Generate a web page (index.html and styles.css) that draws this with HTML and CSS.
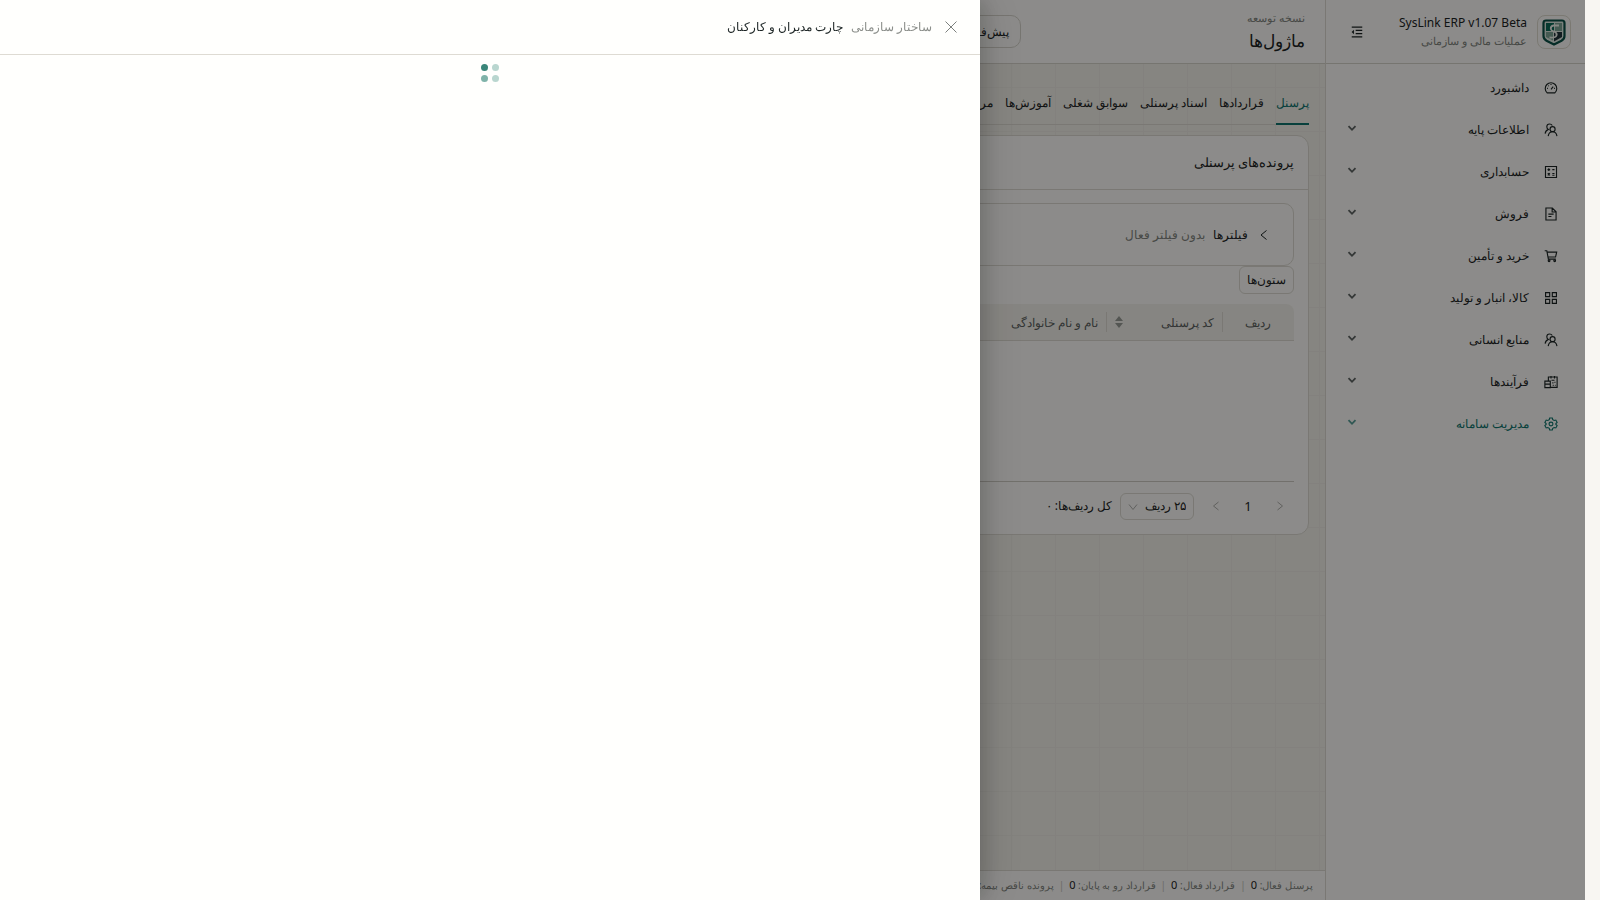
FILE: index.html
```
<!DOCTYPE html>
<html lang="fa" dir="rtl">
<head>
    <meta charset="UTF-8">
    <meta name="viewport" content="width=device-width, initial-scale=1.0">
    <title>SysLink ERP</title>
    <link rel="stylesheet" href="styles.css">
</head>
<body>
    <!-- icon sprites -->
    <svg class="sprites" aria-hidden="true">
        <symbol id="i-down" viewBox="0 0 10 10"><path d="M1.5 3.2 5 6.8 8.5 3.2"/></symbol>
        <symbol id="i-team" viewBox="0 0 16 16"><circle cx="9.800" cy="7" r="2.900"/><path d="M4.800 15C5.200 12 7 10 9.800 10S14.400 12 14.800 15"/><path d="M9.500 2.800C8.800 1.700 7.700 1.100 6.400 1.100 4.500 1.100 3.200 2.500 3.200 4.300 3.200 5.700 4 6.800 5 7.300 3 8 1.600 9.800 1.300 12.200"/></symbol>
    </svg>

    <div class="app">
        <aside class="sidebar">
            <div class="brand">
                <div class="brand-logo">
                    <svg viewBox="0 0 26 28">
                        <path d="M5 2.500H21Q23.500 2.500 23.500 5V18Q23.500 21 20.500 22.800L13 26.500 5.500 22.800Q2.500 21 2.500 18V5Q2.500 2.500 5 2.500Z" fill="#dfe9e2" stroke="#0c5147" stroke-width="2.200"/>
                        <path d="M14 5H21V13H14Z" fill="#7fa797"/>
                        <path d="M5 14H12V22.500L5 19Z" fill="#7fa797"/>
                        <path d="M13 14H21V19L13 23.500Z" fill="#22343b"/>
                        <path d="M5 5H13V13H5Z" fill="#0c6b58"/>
                        <path d="M18 7.500H12.500Q9.500 8 9.800 11 10 12.500 13 13.500 16.500 15 15.500 17.500 14.500 20 8.500 19.500" fill="none" stroke="#f3f6f1" stroke-width="1.800"/>
                    </svg>
                </div>
                <div class="brand-text">
                    <strong dir="ltr">SysLink ERP v1.07 Beta</strong>
                    <span>عملیات مالی و سازمانی</span>
                </div>
                <button class="collapse" type="button" aria-label="جمع کردن منو">
                    <svg class="icon" viewBox="0 0 16 16"><path d="M2 2.500H14M6.500 6.200H14M6.500 9.800H14M2 13.500H14"/><path class="solid" d="M4.500 5.500V10.500L1.800 8Z"/></svg>
                </button>
            </div>
            <nav class="menu">
                <a href="#">
                    <svg class="icon" viewBox="0 0 16 16"><path d="M3.600 13.500A6.600 6.600 0 1 1 12.400 13.500ZM8 9.500 10.500 6.500M8 3.500V4.500M3.500 8.500H4.500M11.500 8.500H12.500M4.800 5.200 5.500 5.900"/></svg>
                    <span>داشبورد</span>
                </a>
                <a href="#">
                    <svg class="icon"><use href="#i-team"/></svg>
                    <span>اطلاعات پایه</span>
                    <svg class="chevron"><use href="#i-down"/></svg>
                </a>
                <a href="#">
                    <svg class="icon" viewBox="0 0 16 16"><path d="M1.700 1.700H14.300V14.300H1.700ZM4 5.300H7M5.500 3.800V6.800M9.500 5.300H12M9.500 9.700H12M9.500 11.700H12M4.300 9.400 6.700 11.800M6.700 9.400 4.300 11.800"/></svg>
                    <span>حسابداری</span>
                    <svg class="chevron"><use href="#i-down"/></svg>
                </a>
                <a href="#">
                    <svg class="icon" viewBox="0 0 16 16"><path d="M2.200 1.200H9.500L13.800 5.500V14.800H2.200ZM9.300 1.500V5.700H13.500M5 8.200H11M5 10.900H8.500"/></svg>
                    <span>فروش</span>
                    <svg class="chevron"><use href="#i-down"/></svg>
                </a>
                <a href="#">
                    <svg class="icon" viewBox="0 0 16 16"><path d="M.8 2H3.200L5 11.500H13.500M3.700 3.500H14.500L13.200 9.200H4.600"/><circle cx="5.800" cy="13.500" r="1"/><circle cx="12.200" cy="13.500" r="1"/></svg>
                    <span>خرید و تأمین</span>
                    <svg class="chevron"><use href="#i-down"/></svg>
                </a>
                <a href="#">
                    <svg class="icon" viewBox="0 0 16 16"><path d="M1.800 1.800H6.500V6.500H1.800ZM9.500 1.800H14.200V6.500H9.500ZM1.800 9.500H6.500V14.200H1.800ZM9.500 9.500H14.200V14.200H9.500Z"/></svg>
                    <span>کالا، انبار و تولید</span>
                    <svg class="chevron"><use href="#i-down"/></svg>
                </a>
                <a href="#">
                    <svg class="icon"><use href="#i-team"/></svg>
                    <span>منابع انسانی</span>
                    <svg class="chevron"><use href="#i-down"/></svg>
                </a>
                <a href="#">
                    <svg class="icon" viewBox="0 0 16 16"><path d="M5 7V2.300H15V14.200H7.200M1 7H7.200V14.500H1ZM1 10.500H7.200M8 1V4M12 1V4M8.500 6H12M9.500 9H10.800M12 8.500H13M10 11.800H11M12.500 11.800H13.200"/></svg>
                    <span>فرآیندها</span>
                    <svg class="chevron"><use href="#i-down"/></svg>
                </a>
                <a href="#" class="active">
                    <svg class="icon" viewBox="0 0 16 16"><path d="M6.500 1.200H9.500L10 3.100 11.600 4 13.500 3.500 15 6.100 13.600 7.500V8.500L15 9.900 13.500 12.500 11.600 12 10 12.900 9.500 14.800H6.500L6 12.900 4.400 12 2.500 12.500 1 9.900 2.400 8.500V7.500L1 6.100 2.500 3.500 4.400 4 6 3.100Z"/><circle cx="8" cy="8" r="2.200"/></svg>
                    <span>مدیریت سامانه</span>
                    <svg class="chevron"><use href="#i-down"/></svg>
                </a>
            </nav>
        </aside>

        <div class="main">
            <header class="topbar">
                <div class="page-title">
                    <span>نسخه توسعه</span>
                    <h1>ماژول‌ها</h1>
                </div>
                <button class="preset" type="button">پیش‌فرض</button>
            </header>

            <main class="content">
                <nav class="tabs">
                    <a href="#" class="active">پرسنل</a>
                    <a href="#">قراردادها</a>
                    <a href="#">اسناد پرسنلی</a>
                    <a href="#">سوابق شغلی</a>
                    <a href="#">آموزش‌ها</a>
                    <a href="#">مرخصی</a>
                </nav>

                <section class="panel">
                    <h2>پرونده‌های پرسنلی</h2>
                    <div class="panel-body">
                        <div class="filters">
                            <svg class="arrow" viewBox="0 0 12 12"><path d="M8.500 1.500 3 6 8.500 10.500"/></svg>
                            <strong>فیلترها</strong>
                            <span>بدون فیلتر فعال</span>
                        </div>
                        <button class="columns" type="button">ستون‌ها</button>
                        <table>
                            <thead>
                                <tr>
                                    <th class="col-row">ردیف</th>
                                    <th class="col-code">
                                        <div class="sortable">
                                            کد پرسنلی
                                            <svg viewBox="0 0 8 12"><path d="M0 5 4 0 8 5ZM0 7H8L4 12Z"/></svg>
                                        </div>
                                    </th>
                                    <th>نام و نام خانوادگی</th>
                                </tr>
                            </thead>
                            <tbody>
                                <tr><td colspan="3"></td></tr>
                            </tbody>
                        </table>
                        <div class="pagination">
                            <button type="button" aria-label="قبلی"><svg class="arrow" viewBox="0 0 12 12"><path d="M3.500 2 8.500 6 3.500 10"/></svg></button>
                            <span class="page">1</span>
                            <button type="button" aria-label="بعدی"><svg class="arrow" viewBox="0 0 12 12"><path d="M8.500 2 3.500 6 8.500 10"/></svg></button>
                            <div class="page-size">
                                <select aria-label="تعداد ردیف">
                                    <option>۲۵ ردیف</option>
                                </select>
                                <svg class="arrow" viewBox="0 0 12 12"><path d="M2 3.500 6 8.500 10 3.500"/></svg>
                            </div>
                            <span>کل ردیف‌ها: ۰</span>
                        </div>
                    </div>
                </section>
            </main>

            <footer class="statusbar">
                <span>پرسنل فعال: <b>0</b></span>
                <span>قرارداد فعال: <b>0</b></span>
                <span>قرارداد رو به پایان: <b>0</b></span>
                <span>پرونده ناقص بیمه: <b>0</b></span>
            </footer>
        </div>
    </div>

    <div class="mask"></div>
    <div class="drawer" role="dialog" aria-labelledby="drawer-title">
        <div class="drawer-header">
            <button type="button" aria-label="بستن">
                <svg viewBox="0 0 14 14"><path d="M1.500 1.500 12.500 12.500M12.500 1.500 1.500 12.500"/></svg>
            </button>
            <span>ساختار سازمانی</span>
            <strong id="drawer-title">چارت مدیران و کارکنان</strong>
        </div>
        <div class="drawer-body">
            <div class="spinner"><i></i><i></i><i></i><i></i></div>
        </div>
    </div>
</body>
</html>
```

FILE: styles.css
```
* {
    box-sizing: border-box;
}
body {
    margin: 0;
    padding-right: 15px;
    background-color: #f8f6f2;
    color: #1c2424;
    font-family: "Noto Sans", "Segoe UI", sans-serif;
    font-size: 12px;
    line-height: 20px;
}
button,
select {
    font: inherit;
    color: inherit;
}
a {
    color: inherit;
    text-decoration: none;
}
h1,
h2 {
    margin: 0;
    font-weight: 400;
}
strong,
b {
    font-weight: 400;
}
svg {
    flex: none;
    fill: none;
    stroke: currentColor;
}
.sprites {
    position: absolute;
    width: 0;
    height: 0;
}
.icon {
    width: 14px;
    height: 14px;
    stroke-width: 1.3;
}
.icon .solid {
    fill: currentColor;
    stroke: none;
}
.arrow {
    width: 12px;
    height: 12px;
}
.app {
    display: flex;
    min-height: 100vh;
}

/* Sidebar */
.sidebar {
    flex: none;
    width: 260px;
    background-color: #fffefb;
    border-left: 1px solid #dedbd3;
}
.brand {
    display: flex;
    align-items: center;
    gap: 10px;
    height: 64px;
    padding: 0 14px 0 24px;
    border-bottom: 1px solid #d8d5cd;
}
.brand-logo {
    display: flex;
    align-items: center;
    justify-content: center;
    width: 34px;
    height: 34px;
    border: 1px solid #e0dcd0;
    border-radius: 8px;
}
.brand-logo svg {
    width: 26px;
    height: 28px;
    stroke: none;
}
.brand-text {
    flex: 1;
    display: flex;
    flex-direction: column;
}
.brand-text strong {
    line-height: 18px;
    text-align: right;
}
.brand-text span {
    color: #82857f;
    font-size: 11px;
    line-height: 18px;
}
.collapse {
    display: flex;
    padding: 0;
    border: 0;
    background: none;
}
.menu {
    display: flex;
    flex-direction: column;
    gap: 2px;
    padding: 4px;
}
.menu a {
    display: flex;
    align-items: center;
    gap: 15px;
    height: 40px;
    padding: 0 23px 0 17px;
}
.menu span {
    flex: 1;
}
.menu .active {
    color: #0f766e;
}
.chevron {
    width: 10px;
    height: 10px;
    margin-bottom: 4px;
    stroke-width: 1.8;
    opacity: 0.7;
}

/* Page */
.main {
    flex: 1;
    min-width: 0;
    display: flex;
    flex-direction: column;
    background-color: #f4f2eb;
    background-image:
        repeating-linear-gradient(to right, transparent 0 43px, #eeece5 43px 44px),
        repeating-linear-gradient(to bottom, transparent 0 43px, #eeece5 43px 44px);
}
.topbar {
    display: flex;
    align-items: center;
    gap: 200px;
    height: 64px;
    padding: 0 20px;
    background-color: #fffefb;
    border-bottom: 1px solid #d8d5cd;
}
.page-title {
    width: 84px;
}
.page-title span {
    display: block;
    color: #82857f;
    font-size: 11px;
    line-height: 18px;
}
.page-title h1 {
    font-size: 17px;
    line-height: 28px;
}
.preset {
    height: 33px;
    padding: 0 11px;
    background-color: #fffefb;
    border: 1px solid #d8d5cd;
    border-radius: 10px;
}
.content {
    flex: 1;
    padding: 16px;
}
.tabs {
    display: flex;
    gap: 12px;
    border-bottom: 1px solid #dedbd3;
    margin-bottom: 10px;
}
.tabs a {
    height: 45px;
    padding-top: 13px;
    margin-bottom: -1px;
    border-bottom: 2px solid transparent;
}
.tabs .active {
    color: #0f766e;
    border-color: #0f766e;
}
.panel {
    background-color: #fffefb;
    border: 1px solid #dedbd3;
    border-radius: 12px;
}
.panel h2 {
    padding: 14px;
    border-bottom: 1px solid #dedbd3;
    font-size: 13px;
    line-height: 25px;
}
.panel-body {
    padding: 13px 14px;
}
.filters {
    display: flex;
    align-items: center;
    gap: 8px;
    height: 63px;
    padding: 0 23px;
    border: 1px solid #dedbd3;
    border-radius: 10px;
}
.filters .arrow {
    margin-left: 2px;
}
.filters span {
    color: #82857f;
}
.columns {
    display: block;
    height: 28px;
    padding: 0 7px;
    background-color: #fffefb;
    border: 1px solid #dedbd3;
    border-radius: 6px;
}
table {
    width: 100%;
    margin-top: 10px;
    border-collapse: separate;
    border-spacing: 0;
    table-layout: fixed;
}
th {
    position: relative;
    height: 37px;
    padding: 2px 8px 0;
    background-color: #f5f3ed;
    border-bottom: 1px solid #dedbd3;
    color: #5c625f;
    font-weight: 400;
    text-align: right;
}
th:first-child {
    border-top-right-radius: 8px;
}
th:not(:last-child)::after {
    content: "";
    position: absolute;
    left: 0;
    top: 8px;
    bottom: 8px;
    border-left: 1px solid #dedbd3;
}
.col-row {
    width: 72px;
    text-align: center;
}
.col-code {
    width: 116px;
}
.sortable {
    display: flex;
    align-items: center;
    justify-content: space-between;
}
.sortable svg {
    width: 8px;
    height: 12px;
    margin: 0 0 3px 1px;
    fill: #9a9d98;
    stroke: none;
}
td {
    height: 141px;
    border-bottom: 1px solid #d0cdc5;
}
.pagination {
    display: flex;
    align-items: center;
    gap: 8px;
    padding: 10px 0 1px;
}
.pagination button {
    display: flex;
    align-items: center;
    justify-content: center;
    width: 28px;
    height: 28px;
    padding: 0;
    border: 0;
    background: none;
    color: #b0b0ac;
}
.page {
    width: 20px;
    font-size: 13px;
    text-align: center;
}
.page-size {
    position: relative;
}
.page-size select {
    appearance: none;
    width: 74px;
    height: 27px;
    padding: 0 7px;
    background-color: #fffefb;
    border: 1px solid #dedbd3;
    border-radius: 6px;
}
.page-size .arrow {
    position: absolute;
    left: 7px;
    top: 8px;
    color: #b0b0ac;
}
.statusbar {
    display: flex;
    height: 30px;
    padding: 0 12px;
    background-color: #fffefb;
    border-top: 1px solid #dedbd3;
    color: #82857f;
    font-size: 10px;
    line-height: 28px;
}
.statusbar span + span::before {
    content: "|";
    margin: 0 5px;
    color: #c5c3bc;
}
.statusbar b {
    color: #1c2424;
    font-size: 11px;
}

/* Drawer */
.mask {
    position: fixed;
    inset: 0 15px 0 0;
    background-color: rgba(0, 0, 0, 0.45);
}
.drawer {
    position: fixed;
    inset: 0 auto 0 0;
    width: 980px;
    max-width: 100%;
    background-color: #fffffd;
    box-shadow: 6px 0 16px rgba(0, 0, 0, 0.12), 9px 0 40px rgba(0, 0, 0, 0.12);
}
.drawer-header {
    display: flex;
    align-items: center;
    gap: 8px;
    height: 55px;
    padding: 0 22px;
    border-bottom: 1px solid #dedbd3;
}
.drawer-header button {
    display: flex;
    margin-left: 4px;
    padding: 0;
    border: 0;
    background: none;
    color: #7c807d;
}
.drawer-header svg {
    width: 14px;
    height: 14px;
}
.drawer-header span {
    color: #8c8f8b;
}
.drawer-body {
    display: flex;
    justify-content: center;
    padding: 9px;
}
.spinner {
    display: grid;
    grid-template-columns: 7px 7px;
    gap: 4px;
}
.spinner i {
    height: 7px;
    border-radius: 50%;
    background-color: #b9d6cf;
}
.spinner i:nth-child(2) {
    background-color: #3a8679;
}
.spinner i:nth-child(4) {
    background-color: #7fb3a9;
}
```
